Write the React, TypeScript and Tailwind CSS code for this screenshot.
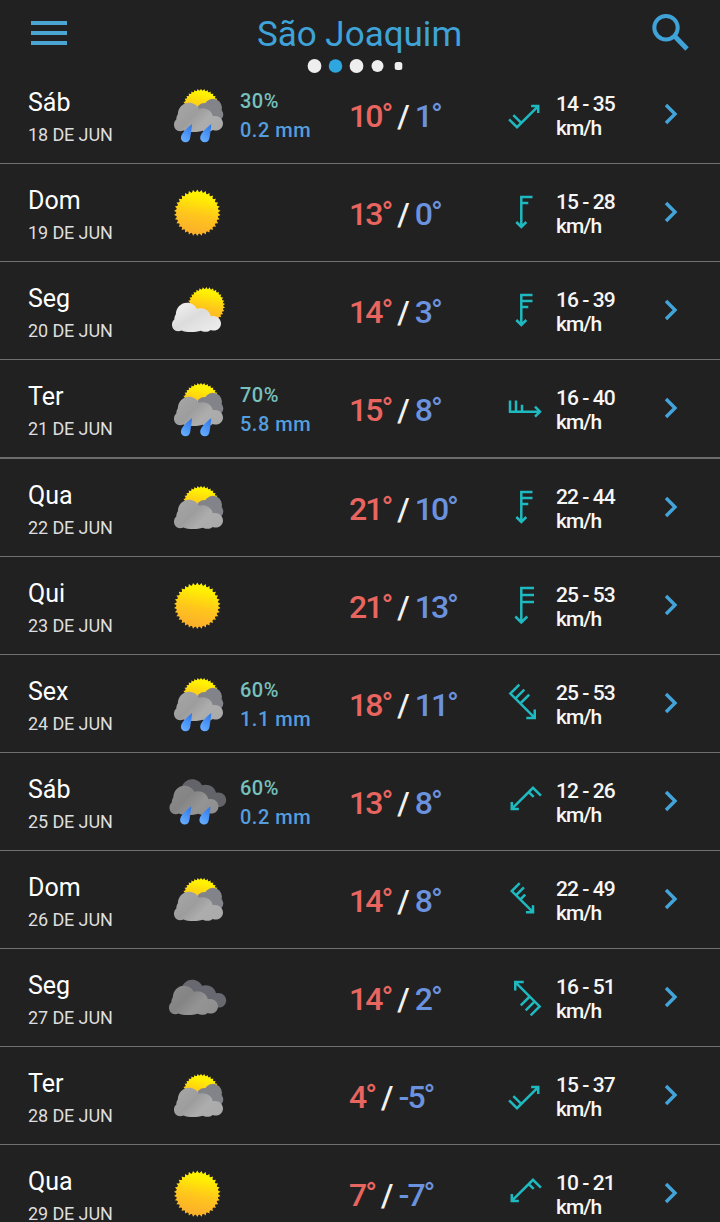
import React from 'react';

type Sky = 'sun' | 'fair' | 'partly' | 'showers' | 'cloudy' | 'rain';
type Barbs = 'one' | 'two' | 'twoHalf' | 'three';

interface DayForecast {
  day: string;
  date: string;
  sky: Sky;
  chance?: string;
  rain?: string;
  high: string;
  low: string;
  barbs: Barbs;
  angle: number;
  wind: string;
}

const forecast: DayForecast[] = [
  { day: 'Sáb', date: '18 DE JUN', sky: 'showers', chance: '30%', rain: '0.2 mm', high: '10', low: '1', barbs: 'two', angle: -135, wind: '14 - 35' },
  { day: 'Dom', date: '19 DE JUN', sky: 'sun', high: '13', low: '0', barbs: 'one', angle: 0, wind: '15 - 28' },
  { day: 'Seg', date: '20 DE JUN', sky: 'fair', high: '14', low: '3', barbs: 'twoHalf', angle: 0, wind: '16 - 39' },
  { day: 'Ter', date: '21 DE JUN', sky: 'showers', chance: '70%', rain: '5.8 mm', high: '15', low: '8', barbs: 'twoHalf', angle: -90, wind: '16 - 40' },
  { day: 'Qua', date: '22 DE JUN', sky: 'partly', high: '21', low: '10', barbs: 'twoHalf', angle: 0, wind: '22 - 44' },
  { day: 'Qui', date: '23 DE JUN', sky: 'sun', high: '21', low: '13', barbs: 'three', angle: 0, wind: '25 - 53' },
  { day: 'Sex', date: '24 DE JUN', sky: 'showers', chance: '60%', rain: '1.1 mm', high: '18', low: '11', barbs: 'three', angle: -45, wind: '25 - 53' },
  { day: 'Sáb', date: '25 DE JUN', sky: 'rain', chance: '60%', rain: '0.2 mm', high: '13', low: '8', barbs: 'one', angle: 45, wind: '12 - 26' },
  { day: 'Dom', date: '26 DE JUN', sky: 'partly', high: '14', low: '8', barbs: 'twoHalf', angle: -45, wind: '22 - 49' },
  { day: 'Seg', date: '27 DE JUN', sky: 'cloudy', high: '14', low: '2', barbs: 'three', angle: 135, wind: '16 - 51' },
  { day: 'Ter', date: '28 DE JUN', sky: 'partly', high: '4', low: '-5', barbs: 'two', angle: -135, wind: '15 - 37' },
  { day: 'Qua', date: '29 DE JUN', sky: 'sun', high: '7', low: '-7', barbs: 'one', angle: 45, wind: '10 - 21' },
];

// Shaft plus arrow head, pointing down; the icon is rotated around 20,20
const barbPaths: Record<Barbs, string> = {
  one: 'M27.5 5H16.3V35M16.3 11H23.3M11.3 30L16.3 35L21.3 30',
  two: 'M27.5 5H16.3V35M16.3 11H27.5M11.3 30L16.3 35L21.3 30',
  twoHalf: 'M27.5 5H16.3V35M16.3 11H27.5M16.3 17H23.3M11.3 30L16.3 35L21.3 30',
  three: 'M29 3H16.3V37.5M16.3 10H29M16.3 17H29M10.3 31.5L16.3 37.5L22.3 31.5',
};

const starPoints = (cx: number, cy: number, r: number) => {
  const rays = 34;
  return Array.from({ length: rays * 2 }, (_, i) => {
    const a = (i * Math.PI) / rays - Math.PI / 2;
    const d = i % 2 === 0 ? r : r * 0.87;
    return `${(cx + d * Math.cos(a)).toFixed(2)},${(cy + d * Math.sin(a)).toFixed(2)}`;
  }).join(' ');
};

const Sun: React.FC<{ cx: number; cy: number; r: number }> = ({ cx, cy, r }) => (
  <g fill="url(#sunFill)">
    <polygon points={starPoints(cx, cy, r)} />
    <circle cx={cx} cy={cy} r={r * 0.9} />
  </g>
);

const Cloud: React.FC<{ x: number; y: number; fill: string }> = ({ x, y, fill }) => (
  <path
    transform={`translate(${x} ${y})`}
    fill={fill}
    d="M9.8 31.5C10 24.5 15 19.7 21 19.7C25.500 19.700 29 22 30.800 25.800C37 24 43.500 27 44.800 33.300C50.500 32 55 36 55 40.500C55 45.500 50 49 44.800 47C42 49.300 37.500 49.300 35 47.700C29 49.500 20 49.500 15.500 47.500C10 50 5.800 46 6 41.500C6 39.300 7 37.500 8.300 36.500C8.300 34.500 8.800 32.800 9.800 31.500Z"
  />
);

const BackCloud: React.FC = () => (
  <g fill="#83848a">
    <circle cx="45" cy="24.800" r="9" />
    <circle cx="36.500" cy="28" r="8" />
    <circle cx="49.300" cy="31.500" r="6" />
    <path d="M36 28H50V37H40Z" />
  </g>
);

const Drops: React.FC<{ x: number; y: number }> = ({ x, y }) => (
  <g transform={`translate(${x} ${y})`} fill="url(#dropFill)">
    <path d="M24 41C18.500 45.500 12.800 50.500 12.900 55C13 57.500 15 59.300 17.500 59.300C20 59.300 21.800 57.700 22.200 55C22.900 50 23.800 46 24 41Z" />
    <path d="M43.300 41C37.800 45.500 32.100 50.500 32.200 55C32.300 57.500 34.300 59.300 36.800 59.300C39.300 59.300 41.100 57.700 41.500 55C42.200 50 43.100 46 43.300 41Z" />
  </g>
);

const SkyIcon: React.FC<{ sky: Sky }> = ({ sky }) => (
  <svg className="mt-[17px] h-16 w-[60px] shrink-0" viewBox="0 0 60 64">
    {sky === 'sun' && <Sun cx={29.3} cy={31.8} r={23.300} />}
    {sky === 'fair' && (
      <>
        <Sun cx={38.300} cy={26.800} r={18.800} />
        <Cloud x={-2} y={4} fill="url(#whiteFill)" />
      </>
    )}
    {sky === 'partly' && (
      <g transform="translate(0 4)">
        <Sun cx={33} cy={24} r={18.300} />
        <BackCloud />
        <Cloud x={0} y={0} fill="url(#grayFill)" />
      </g>
    )}
    {sky === 'showers' && (
      <>
        <Sun cx={33} cy={24} r={18.300} />
        <BackCloud />
        <Cloud x={0} y={0} fill="url(#grayFill)" />
        <Drops x={0} y={0} />
      </>
    )}
    {sky === 'cloudy' && (
      <>
        <Cloud x={3.200} y={-6} fill="#676870" />
        <Cloud x={-5} y={0} fill="url(#darkFill)" />
      </>
    )}
    {sky === 'rain' && (
      <>
        <Cloud x={3.200} y={-10.500} fill="#636469" />
        <Cloud x={-4.500} y={-4} fill="url(#darkFill)" />
        <Drops x={-0.800} y={-4.800} />
      </>
    )}
  </svg>
);

const Gradients: React.FC = () => (
  <svg className="absolute h-0 w-0">
    <defs>
      <linearGradient id="sunFill" x1="0.6" y1="0" x2="0.4" y2="1">
        <stop offset="0.100" stopColor="#fff200" />
        <stop offset="0.550" stopColor="#ffc61c" />
        <stop offset="1" stopColor="#fbae2c" />
      </linearGradient>
      <linearGradient id="whiteFill" x1="0.1" y1="0.1" x2="0.9" y2="0.9">
        <stop offset="0" stopColor="#efefef" />
        <stop offset="0.450" stopColor="#dcdcdc" />
        <stop offset="1" stopColor="#ececec" />
      </linearGradient>
      <linearGradient id="grayFill" x1="0" y1="0.2" x2="1" y2="0.8">
        <stop offset="0" stopColor="#a6a6a6" />
        <stop offset="0.400" stopColor="#9d9d9d" />
        <stop offset="0.650" stopColor="#adadad" />
        <stop offset="1" stopColor="#aaaaaa" />
      </linearGradient>
      <linearGradient id="darkFill" x1="0" y1="0.2" x2="1" y2="0.8">
        <stop offset="0" stopColor="#8b8b8b" />
        <stop offset="0.350" stopColor="#848484" />
        <stop offset="0.650" stopColor="#949494" />
        <stop offset="1" stopColor="#8f8f8f" />
      </linearGradient>
      <linearGradient id="dropFill" x1="0.8" y1="0" x2="0.3" y2="1">
        <stop offset="0" stopColor="#2f78e8" />
        <stop offset="1" stopColor="#66adff" />
      </linearGradient>
    </defs>
  </svg>
);

const Header: React.FC = () => (
  <header className="relative z-10 h-[82px] bg-[#212121]">
    <div className="flex h-[66px] items-start justify-between pr-[30px] pl-[31px]">
      <button className="mt-[21px] flex w-9 flex-col gap-1.5">
        <span className="h-1 bg-[#4aa5d2]" />
        <span className="h-1 bg-[#4aa5d2]" />
        <span className="h-1 bg-[#4aa5d2]" />
      </button>
      <h1 className="mt-[15px] ml-[2px] text-[35px] leading-10 text-[#3fa3d8]">São Joaquim</h1>
      <button className="mt-3">
        <svg className="h-10 w-10" viewBox="0 0 40 40" fill="none" stroke="#3fa3d8" strokeWidth="4">
          <circle cx="16" cy="15.700" r="11.700" />
          <path d="M24.500 24L37 37" strokeWidth="4.800" />
        </svg>
      </button>
    </div>
    {/* Page indicator */}
    <svg className="absolute top-[58px] left-[306px] h-4 w-[100px]" viewBox="0 0 100 16" fill="#eeeeee">
      <circle cx="8.500" cy="8" r="6.900" />
      <circle cx="29.500" cy="8" r="6.800" fill="#2ea7e0" />
      <circle cx="50.500" cy="8" r="6.900" />
      <circle cx="71.500" cy="8" r="6" />
      <rect x="88.700" y="4" width="7.600" height="8" rx="2.500" />
    </svg>
  </header>
);

const Temperature: React.FC<{ value: string; className: string }> = ({ value, className }) => (
  <span className={className}>
    {value}
    <span className="align-[1px] text-[31px] leading-none">°</span>
  </span>
);

const ForecastRow: React.FC<{ item: DayForecast; weekEnd: boolean }> = ({ item, weekEnd }) => (
  <li
    className={`flex shrink-0 items-start pl-7 ${
      weekEnd ? 'h-[99px] border-b-2 border-[#6c6c6c]' : 'h-[98px] border-b border-[#707070]'
    }`}
  >
    <div className="w-[140px] shrink-0 pt-5">
      <div className="text-[25px] leading-[33px] text-white">{item.day}</div>
      <div className="text-[18px] leading-8 tracking-[-0.1px] text-[#dedede]">{item.date}</div>
    </div>

    <SkyIcon sky={item.sky} />

    <div className="ml-3 w-[110px] shrink-0 pt-[21px] text-[20px] leading-[29px] font-medium tracking-[0.5px]">
      <div className="text-[#76c0bd]">{item.chance}</div>
      <div className="text-[#549edf]">{item.rain}</div>
    </div>

    <div className="w-[155px] shrink-0 pt-[30px] text-[32px] leading-10 font-medium tracking-[-2px] whitespace-nowrap">
      <Temperature value={item.high} className="-ml-px text-[#e96560]" />
      <span className="mr-[7px] ml-[6px] text-[#f2f2f2]">/</span>
      <Temperature value={item.low} className="text-[#6b92de]" />
    </div>

    <svg className="mt-7 h-10 w-10 shrink-0 overflow-visible" viewBox="0 0 40 40" fill="none" stroke="#1fb9c0" strokeWidth="2.500">
      <path d={barbPaths[item.barbs]} transform={`rotate(${item.angle} 20 20)`} />
    </svg>

    <div className="ml-[11px] w-[100px] shrink-0 pt-[26px] text-[21px] leading-6 font-medium tracking-[-0.95px] text-[#f6f6f6]">
      <div>{item.wind}</div>
      <div>km/h</div>
    </div>

    <svg className="mt-[37px] ml-[7px] h-[22px] w-4 shrink-0" viewBox="0 0 16 22" fill="none" stroke="#43a4da" strokeWidth="3.400">
      <path d="M3 2L12 11L3 20" />
    </svg>
  </li>
);

export default function App() {
  return (
    <div className="relative h-[1222px] w-[720px] overflow-hidden bg-[#212121] font-[Roboto,sans-serif]">
      <Gradients />
      <Header />
      {/* The list is scrolled slightly under the header */}
      <ul className="-mt-4 flex flex-col">
        {forecast.map((item, index) => (
          <ForecastRow key={item.date} item={item} weekEnd={index === 3} />
        ))}
      </ul>
    </div>
  );
}
